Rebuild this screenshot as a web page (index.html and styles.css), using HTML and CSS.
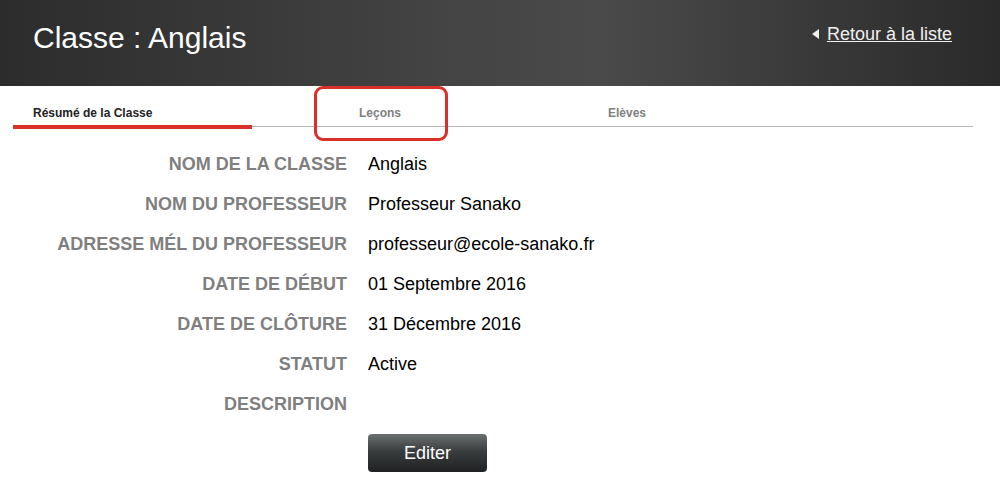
FILE: index.html
```html
<!DOCTYPE html>
<html lang="fr">
<head>
    <meta charset="UTF-8">
    <meta name="viewport" content="width=device-width, initial-scale=1.0">
    <title>Classe : Anglais</title>
    <link rel="stylesheet" href="styles.css">
</head>
<body>
    <div class="page-header">
        <h1>Classe : Anglais</h1>
        <a href="#" class="back-link"><span class="arrow"></span>Retour à la liste</a>
    </div>

    <!-- Onglets -->
    <div class="tabs">
        <a href="#" class="tab tab-first active">Résumé de la Classe</a>
        <a href="#" class="tab tab-second">Leçons</a>
        <a href="#" class="tab tab-third">Elèves</a>
        <div class="highlight"></div>
    </div>

    <div class="details">
        <div class="label">Nom de la classe</div>
        <div class="value">Anglais</div>

        <div class="label">Nom du professeur</div>
        <div class="value">Professeur Sanako</div>

        <div class="label">Adresse mél du professeur</div>
        <div class="value">professeur@ecole-sanako.fr</div>

        <div class="label">Date de début</div>
        <div class="value">01 Septembre 2016</div>

        <div class="label">Date de clôture</div>
        <div class="value">31 Décembre 2016</div>

        <div class="label">Statut</div>
        <div class="value">Active</div>

        <div class="label">Description</div>
        <div class="value"></div>

        <div></div>
        <div class="actions"><button class="btn-edit">Editer</button></div>
    </div>
</body>
</html>
```

FILE: styles.css
```css
body {
    font-family: "Liberation Sans", Arial, sans-serif;
    margin: 0;
    background: #fff;
}
.page-header {
    height: 86px;
    display: flex;
    align-items: center;
    justify-content: space-between;
    padding: 0 48px 0 33px;
    background: linear-gradient(90deg, #2c2c2c 0%, #444 45%, #4a4a4a 60%, #2a2a2a 100%);
}
.page-header h1 {
    margin: 0 0 10px 0;
    font-size: 30px;
    font-weight: normal;
    color: #fff;
}
.back-link {
    display: flex;
    align-items: center;
    margin-bottom: 18px;
    color: #f0f0f0;
    font-size: 18px;
    text-decoration: underline;
}
.back-link .arrow {
    width: 0;
    height: 0;
    border-top: 5px solid transparent;
    border-bottom: 5px solid transparent;
    border-right: 7px solid #f0f0f0;
    margin-right: 8px;
}
.tabs {
    position: relative;
    display: flex;
    margin: 0 27px 0 13px;
    border-bottom: 1px solid #b5b5b5;
}
.tab {
    display: block;
    padding: 20px 0 5px;
    font-size: 12px;
    font-weight: bold;
    color: #808080;
    text-decoration: none;
    text-align: center;
}
.tab-first {
    width: 219px;
    padding-left: 20px;
    text-align: left;
}
.tab-second {
    width: 256px;
}
.tab-third {
    width: 238px;
}
.tab.active {
    color: #222;
    border-bottom: 4px solid #d9302a;
    margin-bottom: -3px;
}
.highlight {
    position: absolute;
    left: 301px;
    top: 0;
    width: 128px;
    height: 49px;
    border: 3px solid #d9302a;
    border-radius: 9px;
}
.details {
    display: grid;
    grid-template-columns: 347px 1fr;
    column-gap: 21px;
    margin-top: 27px;
}
.label {
    height: 40px;
    text-align: right;
    text-transform: uppercase;
    font-size: 18px;
    font-weight: bold;
    color: #7f7f7f;
}
.value {
    height: 40px;
    font-size: 18px;
    color: #000;
}
.btn-edit {
    width: 119px;
    height: 38px;
    border: none;
    border-radius: 4px;
    background: linear-gradient(180deg, #6c7071 0%, #3a3d3e 45%, #1f2122 100%);
    color: #fff;
    font-family: "Liberation Sans", Arial, sans-serif;
    font-size: 18px;
    cursor: pointer;
}
```
